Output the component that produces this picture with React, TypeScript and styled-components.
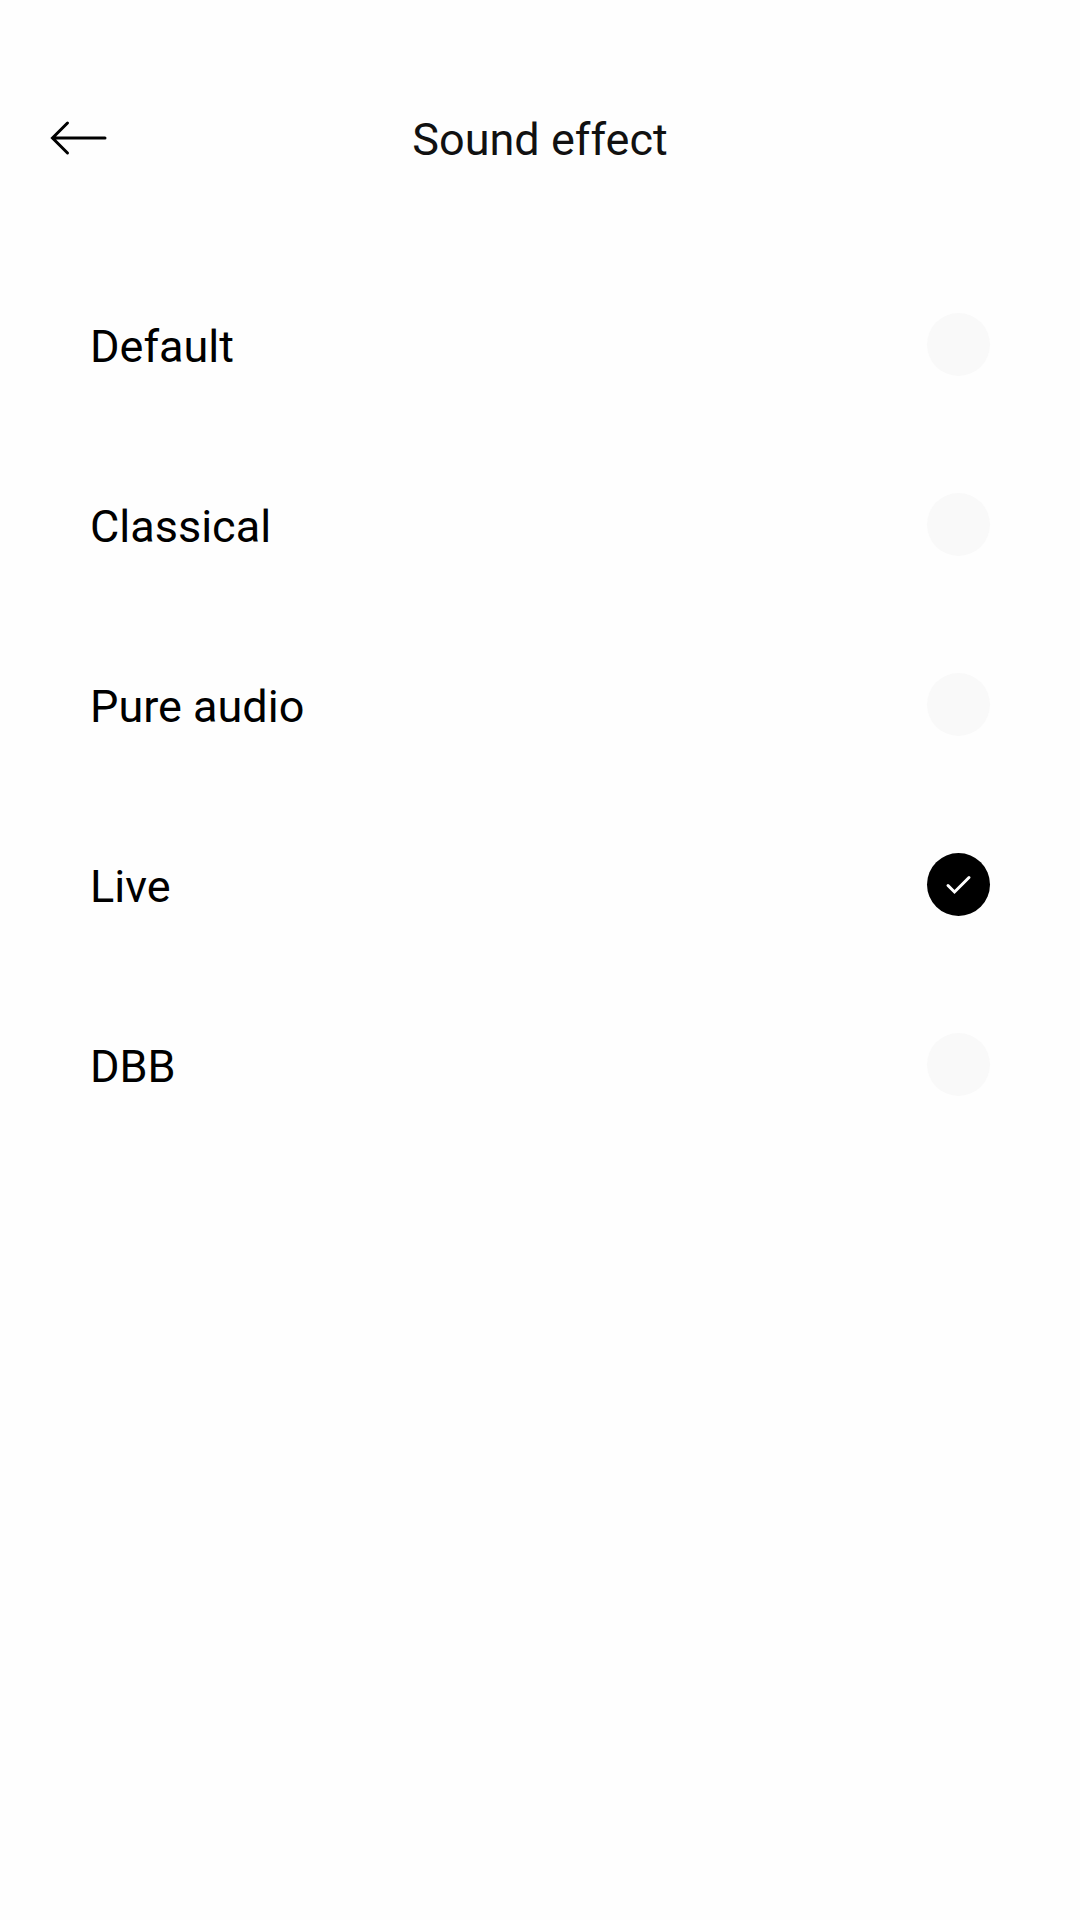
import React, { useState } from 'react';
import styled, { createGlobalStyle } from 'styled-components';

const GlobalStyle = createGlobalStyle`
  *, *::before, *::after { box-sizing: border-box; }
  body { margin: 0; background: #fefefe; }
`;

const Screen = styled.div`
  min-height: 100vh;
  padding-top: 48px;
  font-family: Roboto, "Liberation Sans", sans-serif;
  font-size: 45px;
  line-height: 60px;
  color: #000;
  background: #fefefe;
`;

const TopBar = styled.header`
  display: grid;
  grid-template-columns: 80px 1fr 80px;
  align-items: center;
  height: 180px;
  padding: 0 40px;
`;

const BackButton = styled.button`
  display: flex;
  align-items: center;
  height: 80px;
  padding: 0;
  border: 0;
  background: none;
  color: inherit;
  cursor: pointer;
`;

const Title = styled.h1`
  margin: 0;
  padding-top: 4px;
  font: inherit;
  text-align: center;
  color: #111;
`;

const Options = styled.fieldset`
  min-width: 0;
  margin: 0;
  padding: 26px 90px 0;
  border: 0;
`;

const OptionRow = styled.label`
  display: flex;
  align-items: center;
  justify-content: space-between;
  height: 180px;
  cursor: pointer;
`;

const OptionName = styled.span`
  padding-top: 6px;
`;

const Marker = styled.span`
  display: grid;
  width: 63px;
  height: 63px;
`;

const Radio = styled.input`
  grid-area: 1 / 1;
  appearance: none;
  width: 100%;
  height: 100%;
  margin: 0;
  border-radius: 50%;
  background: #f9f9f9;
  cursor: pointer;

  &:checked { background: #000; }
`;

const Tick = styled.svg`
  grid-area: 1 / 1;
  pointer-events: none;
`;

const effects = ['Default', 'Classical', 'Pure audio', 'Live', 'DBB'];

export default function App() {
  const [selected, setSelected] = useState('Live');

  return (
    <Screen>
      <GlobalStyle />
      <TopBar>
        <BackButton type="button" aria-label="Back">
          <svg width="70" height="40" viewBox="0 0 70 40" fill="none" stroke="currentColor" strokeWidth="3" strokeLinecap="round">
            <path d="M65 20H13M27.5 5L12.5 20L27.5 35" />
          </svg>
        </BackButton>
        <Title>Sound effect</Title>
      </TopBar>
      <Options aria-label="Sound effect">
        {effects.map((name) => (
          <OptionRow key={name}>
            <OptionName>{name}</OptionName>
            <Marker>
              <Radio
                type="radio"
                name="effect"
                value={name}
                checked={selected === name}
                onChange={() => setSelected(name)}
              />
              {selected === name && (
                <Tick width="63" height="63" viewBox="0 0 63 63" fill="none" stroke="#fff" strokeWidth="3" strokeLinecap="round">
                  <path d="M21 32.5L27.5 39L42 24.5" />
                </Tick>
              )}
            </Marker>
          </OptionRow>
        ))}
      </Options>
    </Screen>
  );
}
